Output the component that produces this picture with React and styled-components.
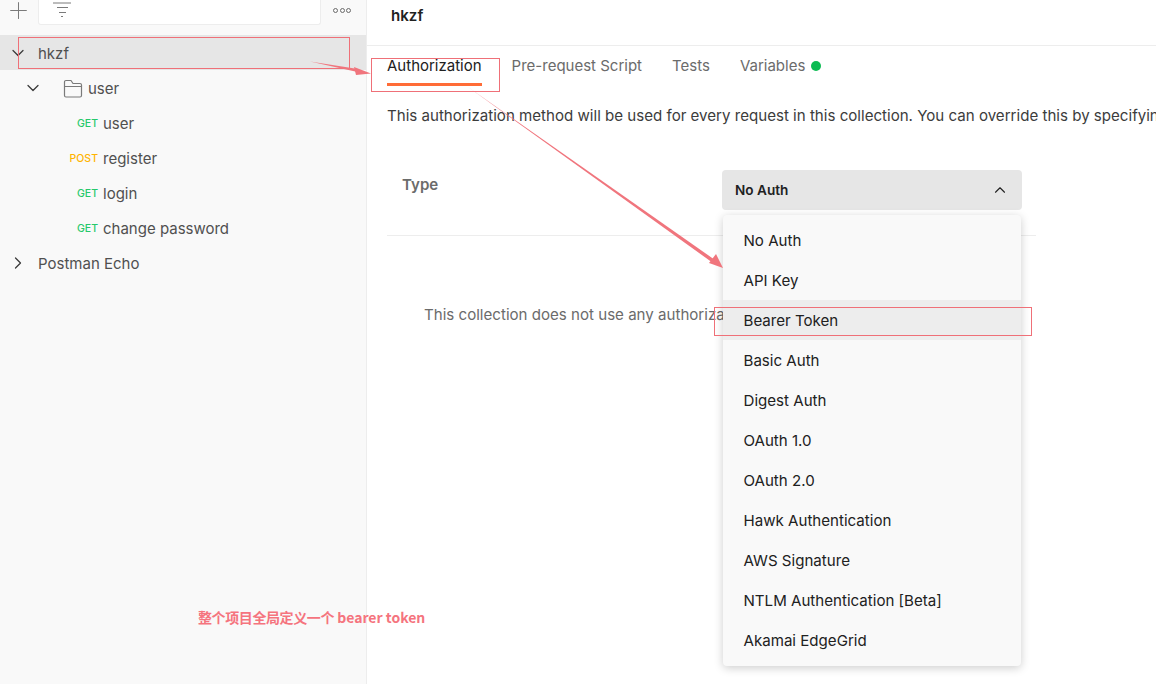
import React from 'react';
import styled, { createGlobalStyle } from 'styled-components';
import { ChevronDown, ChevronRight, ChevronUp, Plus } from 'lucide-react';

const Global = createGlobalStyle`
  html, body { margin: 0; padding: 0; height: 100%; background: #fff; overflow: hidden; }
  body { font-family: Inter, "Noto Sans", sans-serif; font-size: 15.1px; color: #212121; }
  * { box-sizing: border-box; }
`;

const Page = styled.div`
  position: relative;
  display: flex;
  width: 1156px;
  height: 684px;
  overflow: hidden;
`;

const Sidebar = styled.aside`
  flex: 0 0 367px;
  background: #f9f9f9;
  border-right: 1px solid #ededed;
`;

const SideBar = styled.div`
  display: flex;
  align-items: flex-start;
  height: 35px;
  padding-left: 8px;
`;

const IconSlot = styled.div`
  display: flex;
  align-items: center;
  justify-content: center;
  width: 20px;
  height: 20px;
  color: #7a7a7a;
`;

const SearchBox = styled.div`
  width: 283px;
  height: 25px;
  margin-left: 10px;
  padding-left: 14px;
  background: #fff;
  border: 1px solid #ededed;
  border-top: 0;
  border-radius: 0 0 3px 3px;
`;

const FilterIcon = styled.svg`
  display: block;
  width: 20px;
  height: 18px;
  fill: none;
  stroke: #7a7a7a;
  stroke-width: 1;
`;

const More = styled.div`
  display: flex;
  gap: 1.5px;
  margin: 8px 0 0 12px;
`;

const MoreDot = styled.span`
  width: 5px;
  height: 5px;
  border: 1px solid #6b6b6b;
  border-radius: 50%;
`;

const Row = styled.div`
  display: flex;
  align-items: center;
  height: 35px;
  padding-left: ${p => p.$indent}px;
  background: ${p => (p.$active ? '#e6e6e6' : 'transparent')};
  color: #505050;
  font-size: 15px;
  line-height: 20px;
`;

const RowLabel = styled.span`
  padding-top: 2px;
`;

const Caret = styled.span`
  display: flex;
  width: ${p => p.$width || 20}px;
  color: #3a3a3a;
`;

const FolderIcon = styled.svg`
  width: 20px;
  height: 20px;
  margin-right: 5px;
  fill: none;
  stroke: #7a7a7a;
  stroke-width: 1.2;
`;

const Method = styled.span`
  flex: 0 0 103px;
  padding: 2px 5px 0 0;
  text-align: right;
  font-size: 10.5px;
  font-weight: 500;
  color: ${p => (p.$post ? '#ffb400' : '#26c96b')};
`;

const Main = styled.main`
  flex: 1;
  min-width: 0;
`;

const Header = styled.header`
  height: 46px;
  padding: 6px 0 0 24px;
  border-bottom: 1px solid #ededed;
  font-weight: 600;
  line-height: 20px;
  color: #212121;
`;

const Tabs = styled.nav`
  display: flex;
  gap: 30px;
  height: 40px;
  padding-left: 20px;
  font-size: 15px;
`;

const Tab = styled.div`
  display: flex;
  align-items: center;
  height: 40px;
  padding-top: 2px;
  color: ${p => (p.$active ? '#212121' : '#6b6b6b')};
  border-bottom: 3px solid ${p => (p.$active ? '#ff6c37' : 'transparent')};
`;

const Dot = styled.span`
  width: 10px;
  height: 10px;
  margin-left: 6px;
  border-radius: 50%;
  background: #0cbb52;
`;

const Description = styled.p`
  margin: 0;
  padding: 20px 0 0 20px;
  line-height: 20px;
  white-space: nowrap;
  color: #3c3c3c;
`;

const AuthPanel = styled.section`
  width: 649px;
  margin: 0 0 0 20px;
`;

const TypeRow = styled.div`
  display: flex;
  align-items: flex-start;
  height: 110px;
  padding: 44px 0 0 15px;
  border-bottom: 1px solid #ededed;
`;

const TypeLabel = styled.div`
  flex: 0 0 320px;
  padding-top: 5px;
  font-weight: 600;
  color: #6b6b6b;
  line-height: 20px;
`;

const Select = styled.div`
  display: flex;
  align-items: center;
  justify-content: space-between;
  width: 300px;
  height: 40px;
  padding: 0 13px;
  background: #e6e6e6;
  border-radius: 4px;
  font-size: 13.6px;
  font-weight: 600;
  color: #212121;
`;

const Empty = styled.p`
  margin: 0;
  padding: 69px 0 0 37px;
  line-height: 20px;
  white-space: nowrap;
  color: #6b6b6b;
`;

const Menu = styled.ul`
  position: absolute;
  left: 723px;
  top: 215px;
  width: 298px;
  height: 451px;
  margin: 0;
  padding: 5px 0 0;
  list-style: none;
  background: #f9f9f9;
  border-radius: 4px;
  box-shadow: 0 2px 10px rgba(0, 0, 0, 0.2);
`;

const MenuItem = styled.li`
  display: flex;
  align-items: center;
  height: 40px;
  padding-left: 20.5px;
  color: #212121;
  background: ${p => (p.$hover ? '#ededed' : 'transparent')};
`;

const Mark = styled.div`
  position: absolute;
  left: ${p => p.$x}px;
  top: ${p => p.$y}px;
  width: ${p => p.$w}px;
  height: ${p => p.$h}px;
  border: 1px solid #ef7078;
`;

const Arrows = styled.svg`
  position: absolute;
  inset: 0;
  width: 1156px;
  height: 684px;
  pointer-events: none;
`;

const Note = styled.div`
  position: absolute;
  left: 198px;
  top: 608px;
  font-family: "Noto Sans CJK SC", "Noto Sans", sans-serif;
  font-size: 14px;
  line-height: 18px;
  font-weight: 700;
  color: #f5747e;
  white-space: nowrap;
`;

const NoteCjk = styled.span`
  letter-spacing: -0.4px;
`;

const authTypes = [
  'No Auth',
  'API Key',
  'Bearer Token',
  'Basic Auth',
  'Digest Auth',
  'OAuth 1.0',
  'OAuth 2.0',
  'Hawk Authentication',
  'AWS Signature',
  'NTLM Authentication [Beta]',
  'Akamai EdgeGrid',
];

function Requests() {
  return (
    <>
      <Row $indent={0}><Method>GET</Method><RowLabel>user</RowLabel></Row>
      <Row $indent={0}><Method $post>POST</Method><RowLabel>register</RowLabel></Row>
      <Row $indent={0}><Method>GET</Method><RowLabel>login</RowLabel></Row>
      <Row $indent={0}><Method>GET</Method><RowLabel>change password</RowLabel></Row>
    </>
  );
}

export default function App() {
  return (
    <Page>
      <Global />
      <Sidebar>
        <SideBar>
          <IconSlot>
            <Plus size={27} strokeWidth={0.9} style={{ flex: 'none' }} />
          </IconSlot>
          <SearchBox>
            <FilterIcon viewBox="0 0 20 18">
              <path d="M0 3h18M4 7.500h11M6 12.500h7M8 16.500h2" />
            </FilterIcon>
          </SearchBox>
          <More>
            <MoreDot />
            <MoreDot />
            <MoreDot />
          </More>
        </SideBar>
        <Row $active $indent={8}>
          <Caret $width={30}><ChevronDown size={20} strokeWidth={1.5} /></Caret>
          <RowLabel>hkzf</RowLabel>
        </Row>
        <Row $indent={23}>
          <Caret $width={40}><ChevronDown size={20} strokeWidth={1.5} /></Caret>
          <FolderIcon viewBox="0 0 20 20">
            <path d="M1.500 4a1.500 1.500 0 0 1 1.500-1.500h5l2 3h7a1.500 1.500 0 0 1 1.500 1.500v10.500a1.500 1.500 0 0 1-1.500 1.500H3a1.500 1.500 0 0 1-1.500-1.500zM1.500 8.500h17" />
          </FolderIcon>
          <RowLabel>user</RowLabel>
        </Row>
        <Requests />
        <Row $indent={8}>
          <Caret $width={30}><ChevronRight size={20} strokeWidth={1.5} /></Caret>
          <RowLabel>Postman Echo</RowLabel>
        </Row>
      </Sidebar>

      <Main>
        <Header>hkzf</Header>
        <Tabs>
          <Tab $active>Authorization</Tab>
          <Tab>Pre-request Script</Tab>
          <Tab>Tests</Tab>
          <Tab>Variables<Dot /></Tab>
        </Tabs>
        <Description>
          This authorization method will be used for every request in this collection. You can override this by specifying one in the request.
        </Description>
        <AuthPanel>
          <TypeRow>
            <TypeLabel>Type</TypeLabel>
            <Select>
              No Auth
              <ChevronUp size={18} strokeWidth={1.5} />
            </Select>
          </TypeRow>
          <Empty>This collection does not use any authorization.</Empty>
        </AuthPanel>
      </Main>

      <Menu>
        {authTypes.map(t => (
          <MenuItem key={t} $hover={t === 'Bearer Token'}>{t}</MenuItem>
        ))}
      </Menu>

      <Mark $x={18} $y={37} $w={332} $h={32} />
      <Mark $x={371} $y={58} $w={129} $h={34} />
      <Mark $x={714} $y={307} $w={318} $h={29} />
      <Arrows viewBox="0 0 1156 684">
        <path d="M310 61.500 L358 69 L357.500 72 Z" fill="#f0757d" />
        <path d="M371 73.500 L354 67 L356 75 Z" fill="#f0757d" />
        <path d="M468 87 L715 260 L713 263 Z" fill="#f0757d" />
        <path d="M723 268 L709 263 L716 254 Z" fill="#f0757d" />
      </Arrows>
      <Note><NoteCjk>整个项目全局定义一个</NoteCjk> bearer token</Note>
    </Page>
  );
}
